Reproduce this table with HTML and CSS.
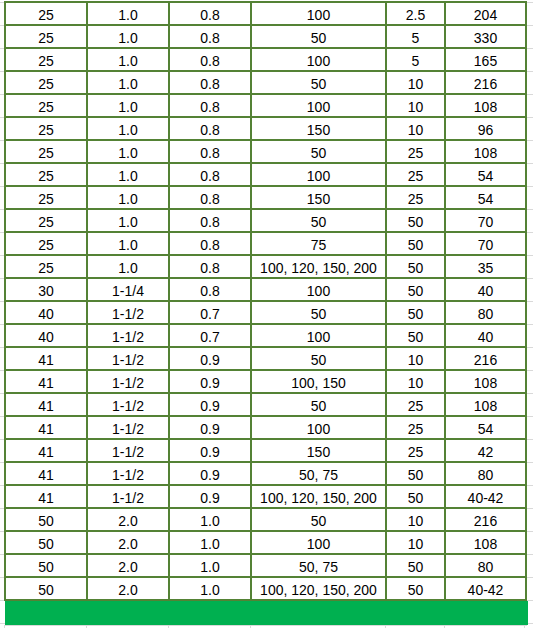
FILE: index.html
```html
<!DOCTYPE html>
<html lang="en">
<head>
<meta charset="utf-8">
<title>Table</title>
<link rel="stylesheet" href="styles.css">
</head>
<body>
<div class="sheet">
  <div class="grid" id="grid"></div>
  <div class="bar"></div>
  <div class="foot"><span></span><span></span><span></span><span></span><span></span><span></span></div>
</div>
<script>
var rows = [
["25","1.0","0.8","100","2.5","204"],
["25","1.0","0.8","50","5","330"],
["25","1.0","0.8","100","5","165"],
["25","1.0","0.8","50","10","216"],
["25","1.0","0.8","100","10","108"],
["25","1.0","0.8","150","10","96"],
["25","1.0","0.8","50","25","108"],
["25","1.0","0.8","100","25","54"],
["25","1.0","0.8","150","25","54"],
["25","1.0","0.8","50","50","70"],
["25","1.0","0.8","75","50","70"],
["25","1.0","0.8","100, 120, 150, 200","50","35"],
["30","1-1/4","0.8","100","50","40"],
["40","1-1/2","0.7","50","50","80"],
["40","1-1/2","0.7","100","50","40"],
["41","1-1/2","0.9","50","10","216"],
["41","1-1/2","0.9","100, 150","10","108"],
["41","1-1/2","0.9","50","25","108"],
["41","1-1/2","0.9","100","25","54"],
["41","1-1/2","0.9","150","25","42"],
["41","1-1/2","0.9","50, 75","50","80"],
["41","1-1/2","0.9","100, 120, 150, 200","50","40-42"],
["50","2.0","1.0","50","10","216"],
["50","2.0","1.0","100","10","108"],
["50","2.0","1.0","50, 75","50","80"],
["50","2.0","1.0","100, 120, 150, 200","50","40-42"]
];
var g = document.getElementById("grid");
rows.forEach(function(r){
  r.forEach(function(c){
    var d = document.createElement("div");
    d.className = "cell";
    d.textContent = c;
    g.appendChild(d);
  });
});
</script>
</body>
</html>
```

FILE: styles.css
```css
html, body {
  margin: 0;
  padding: 0;
}
body {
  width: 533px;
  height: 628px;
  overflow: hidden;
  background-color: #ffffff;
  background-image: repeating-linear-gradient(to bottom, transparent 0 2px, #d9d9d9 2px 3px, transparent 3px 23px);
  font-family: "Liberation Sans", Arial, sans-serif;
  font-size: 14px;
  color: #000;
}
.sheet {
  padding: 1px 0 0 4px;
}
.grid {
  display: grid;
  grid-template-columns: 82px 82px 82px 135px 59px 81px;
  width: 521px;
  border-left: 2px solid #548235;
  border-top: 2px solid #548235;
  background: #fff;
}
.cell {
  box-sizing: border-box;
  height: 23px;
  padding-top: 4px;
  line-height: 17px;
  text-align: center;
  white-space: nowrap;
  border-right: 2px solid #548235;
  border-bottom: 2px solid #548235;
}
.bar {
  margin-left: 1px;
  width: 523px;
  height: 24px;
  background: #00b050;
}
.foot {
  display: grid;
  grid-template-columns: 82px 82px 82px 135px 59px 81px;
  width: 523px;
  height: 4px;
  border-top: 1px solid #d9d9d9;
}
.foot span {
  border-left: 1px solid #d9d9d9;
}
.foot span:last-child {
  border-right: 1px solid #d9d9d9;
}
```
